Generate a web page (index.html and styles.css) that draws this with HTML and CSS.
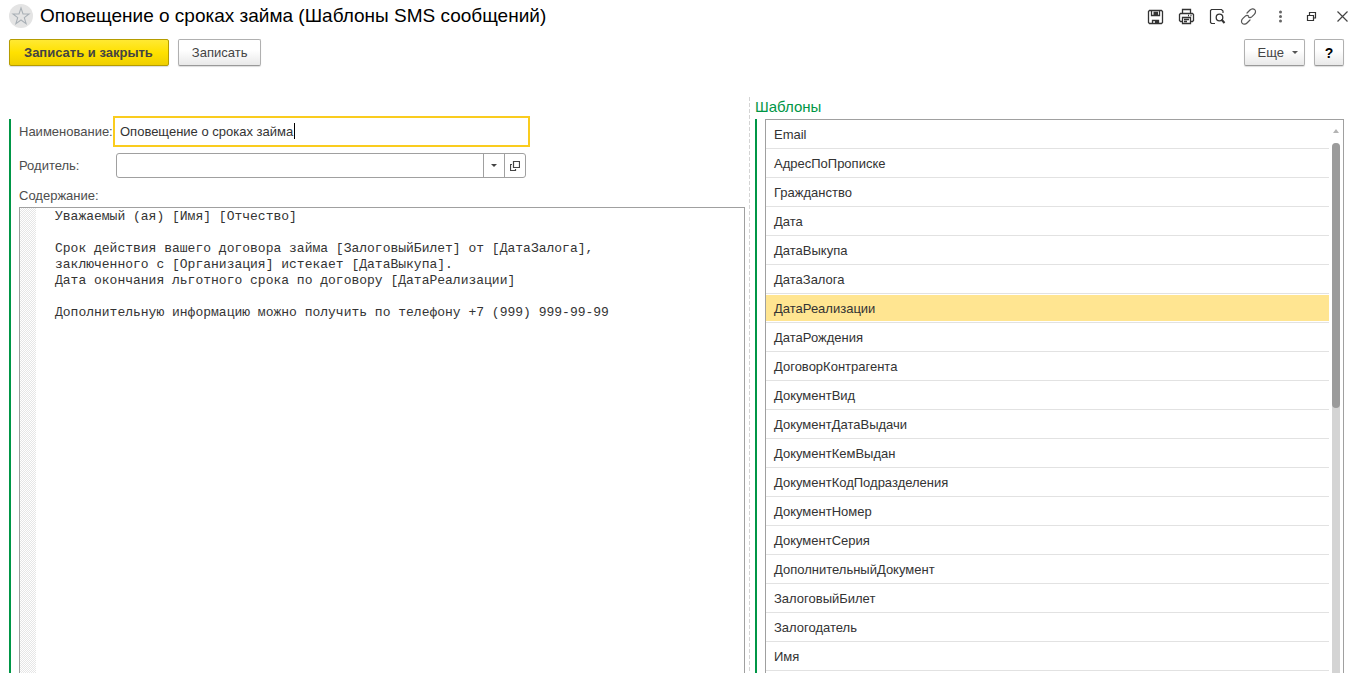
FILE: index.html
```html
<!DOCTYPE html>
<html lang="ru">
<head>
<meta charset="utf-8">
<title>Оповещение о сроках займа (Шаблоны SMS сообщений)</title>
<link rel="stylesheet" href="styles.css">
</head>
<body>
<div class="window">
  <header class="titlebar">
    <button class="star" aria-label="В избранное">
      <svg width="24" height="24" viewBox="0 0 24 24"><circle cx="12" cy="12" r="12" fill="#e4e4e4"/><path d="M12 4l2 6h6l-4.700 3.600 1.800 6L12 16l-5.100 3.600 1.800-6L4 10h6z" fill="none" stroke="#a9b0b6" stroke-width="1.100"/></svg>
    </button>
    <h1 class="title">Оповещение о сроках займа (Шаблоны SMS сообщений)</h1>
    <nav class="tools">
      <button class="tool" aria-label="Сохранить"><svg width="17" height="17" viewBox="0 0 17 17"><path d="M2.500 2.500h12l1 1v11l-1 1h-12l-1-1v-11zM4.500 2.500v5h8v-5M6.500 4.500h4.500M6.500 6h4.500M5.500 15.500v-3h6v3" fill="none" stroke="#333" stroke-width="1.300"/><path d="M8 12.500h3v3H8z" fill="#333"/></svg></button>
      <button class="tool" aria-label="Печать"><svg width="17" height="17" viewBox="0 0 17 17"><path d="M4.500 5.500v-4h8v4M4.500 13.500h-2l-1-1v-6l1-1h12l1 1v6l-1 1h-2M4.500 9.500h8v6h-8zM6 11.500h5M6 13.500h3M10 7.500h1M12.500 7.500h1" fill="none" stroke="#333" stroke-width="1.300"/></svg></button>
      <button class="tool" aria-label="Просмотр"><svg width="17" height="17" viewBox="0 0 17 17"><path d="M6 15.500H2.500L1.500 14.500V2.500L2.500 1.500h10L14 3v2" fill="none" stroke="#333" stroke-width="1.200"/><circle cx="10.500" cy="9.500" r="3.300" fill="none" stroke="#333" stroke-width="1.300"/><path d="M12.500 11.500l3 3.500" stroke="#333" stroke-width="2"/></svg></button>
      <button class="tool" aria-label="Ссылка"><svg width="17" height="17" viewBox="0 0 17 17"><g fill="none" stroke="#555" stroke-width="1.200" stroke-linecap="round"><path d="M7 5l3-3c1.500-1.500 3.500-1.600 4.700-.4s1.100 3.200-.4 4.700L12 8.600c-1.100 1-2.600 1.200-3.500.4"/><path d="M10 12l-3 3c-1.500 1.500-3.500 1.600-4.700.4s-1.100-3.200.4-4.700L5 8.400c1.100-1 2.600-1.200 3.500-.4"/></g></svg></button>
      <button class="tool" aria-label="Ещё"><svg width="17" height="17" viewBox="0 0 17 17" fill="#666"><circle cx="9.500" cy="4" r="1.500"/><circle cx="9.500" cy="8.500" r="1.500"/><circle cx="9.500" cy="13" r="1.500"/></svg></button>
      <button class="tool" aria-label="Свернуть в окно"><svg width="17" height="17" viewBox="0 0 17 17"><path d="M5.500 7.500h6v5h-6zM7.500 7.500V4.500h6v5.500H11.500" fill="none" stroke="#333" stroke-width="1.200"/></svg></button>
      <button class="tool" aria-label="Закрыть"><svg width="17" height="17" viewBox="0 0 17 17"><path d="M4.500 3.500l10 10M14.500 3.500l-10 10" stroke="#444" stroke-width="1.200"/></svg></button>
    </nav>
  </header>

  <div class="commands">
    <button class="btn btn-primary">Записать и закрыть</button>
    <button class="btn">Записать</button>
    <button class="btn btn-more">Еще <svg width="6" height="3" viewBox="0 0 6 3"><path d="M0 0h6L3 3z" fill="#555"/></svg></button>
    <button class="btn btn-help">?</button>
  </div>

  <main class="main">
    <section class="form">
      <div class="row">
        <label class="label" for="name">Наименование:</label>
        <div class="name-field">
          <input class="name-input" id="name" type="text" value="Оповещение о сроках займа">
          <span class="caret"></span>
        </div>
      </div>
      <div class="row row-parent">
        <label class="label" for="parent">Родитель:</label>
        <div class="combo">
          <input class="combo-input" id="parent" type="text">
          <button class="combo-btn" aria-label="Выбрать"><svg width="6" height="3" viewBox="0 0 6 3"><path d="M0 0h6L3 3z" fill="#444"/></svg></button>
          <button class="combo-btn" aria-label="Открыть"><svg width="10" height="10" viewBox="0 0 10 10"><path d="M3.500.5h6v6h-6zM2 3.500H.5v6h5V8" fill="none" stroke="#444" stroke-width="1.200"/></svg></button>
        </div>
      </div>
      <label class="label label-text" for="text">Содержание:</label>
      <div class="editor">
        <div class="gutter"></div>
        <textarea class="text" id="text" spellcheck="false">Уважаемый (ая) [Имя] [Отчество]

Срок действия вашего договора займа [ЗалоговыйБилет] от [ДатаЗалога],
заключенного с [Организация] истекает [ДатаВыкупа].
Дата окончания льготного срока по договору [ДатаРеализации]

Дополнительную информацию можно получить по телефону +7 (999) 999-99-99</textarea>
      </div>
    </section>
    <div class="splitter"></div>
    <section class="templates">
      <h2 class="heading">Шаблоны</h2>
      <div class="group">
        <div class="listbox">
          <ul class="list">
            <li class="item">Email</li>
            <li class="item">АдресПоПрописке</li>
            <li class="item">Гражданство</li>
            <li class="item">Дата</li>
            <li class="item">ДатаВыкупа</li>
            <li class="item">ДатаЗалога</li>
            <li class="item item-selected">ДатаРеализации</li>
            <li class="item">ДатаРождения</li>
            <li class="item">ДоговорКонтрагента</li>
            <li class="item">ДокументВид</li>
            <li class="item">ДокументДатаВыдачи</li>
            <li class="item">ДокументКемВыдан</li>
            <li class="item">ДокументКодПодразделения</li>
            <li class="item">ДокументНомер</li>
            <li class="item">ДокументСерия</li>
            <li class="item">ДополнительныйДокумент</li>
            <li class="item">ЗалоговыйБилет</li>
            <li class="item">Залогодатель</li>
            <li class="item">Имя</li>
          </ul>
          <div class="scroll">
            <svg class="scroll-up" width="6" height="4" viewBox="0 0 6 4"><path d="M3 0l3 4H0z" fill="#b4b4b4"/></svg>
            <div class="track"><div class="thumb"></div></div>
          </div>
        </div>
      </div>
    </section>
  </main>
</div>
</body>
</html>
```
FILE: styles.css
```css
* { box-sizing: border-box; }

body {
  margin: 0;
  background: #fff;
  color: #333;
  font: 13px/16px "Liberation Sans", Arial, sans-serif;
}

button, input, textarea { font: inherit; color: inherit; margin: 0; }

.window {
  display: flex;
  flex-direction: column;
  height: 100vh;
  overflow: hidden;
}

/* Title bar */
.titlebar {
  display: flex;
  align-items: center;
  height: 32px;
  padding: 0 13px 0 9px;
}
.star { display: flex; padding: 0; border: 0; background: none; }
.title {
  flex: 1;
  margin: 0 0 0 7px;
  color: #000;
  font-size: 19px;
  font-weight: 400;
  line-height: 24px;
  white-space: nowrap;
}
.tools { display: flex; gap: 14px; }
.tool { display: flex; padding: 0; border: 0; background: none; }

/* Command bar */
.commands {
  display: flex;
  gap: 9px;
  padding: 7px 19px 0 9px;
}
.btn {
  height: 27px;
  padding: 0 13px;
  border: 1px solid #b0b0b0;
  border-bottom-color: #999;
  border-radius: 2px;
  background: linear-gradient(#fff 40%, #e9e9e9);
  color: #444;
  box-shadow: 0 1px 1px #ddd;
}
.btn-primary {
  padding: 0 15px 0 14px;
  border-color: #b59c00;
  background: linear-gradient(#ffe933, #ffe100 50%, #efcf00);
  font-weight: 700;
}
.btn-more {
  display: flex;
  align-items: center;
  gap: 8px;
  margin-left: auto;
  padding-right: 6px;
}
.btn-help {
  width: 30px;
  padding: 0;
  color: #000;
  font-size: 14px;
  font-weight: 700;
}

/* Content */
.main {
  display: grid;
  grid-template-columns: 736fr 10px 589fr;
  flex: 1;
  min-height: 0;
  padding: 31px 19px 0 9px;
}
.form {
  display: flex;
  flex-direction: column;
  min-width: 0;
  margin-top: 22px;
  padding-left: 8px;
  border-left: 2px solid #009646;
}
.row { display: flex; align-items: center; height: 25px; }
.row-parent { margin-top: 9px; }
.label { width: 94px; color: #4d4d4d; white-space: nowrap; }
.label-text { margin: 10px 0 3px; }

.name-field {
  position: relative;
  width: 417px;
  margin: -4px 0;
}
.name-input {
  width: 100%;
  height: 31px;
  padding: 0 5px;
  border: 2px solid #facc1e;
  outline: 0;
  display: block;
}
.caret {
  position: absolute;
  top: 7px;
  left: 181px;
  width: 1px;
  height: 16px;
  background: #000;
}

.combo {
  display: flex;
  width: 410px;
  height: 25px;
  margin-left: 3px;
  border: 1px solid #a0a0a0;
  border-radius: 3px;
}
.combo-input { flex: 1; min-width: 0; padding: 0 4px; border: 0; background: none; outline: 0; }
.combo-btn {
  display: flex;
  align-items: center;
  justify-content: center;
  width: 21px;
  padding: 0;
  border: 0;
  border-left: 1px solid #a0a0a0;
  background: none;
}

.editor {
  display: flex;
  flex: 1;
  min-height: 0;
  border: 1px solid #a0a0a0;
  border-bottom: 0;
}
.gutter {
  width: 16px;
  background: repeating-conic-gradient(#e6e6e6 0 25%, #fff 0 50%) 0 0 / 2px 2px;
}
.text {
  flex: 1;
  min-width: 0;
  padding: 1px 0 0 19px;
  border: 0;
  outline: 0;
  resize: none;
  overflow: hidden;
  font-family: "Liberation Mono", "Courier New", monospace;
}

.splitter {
  width: 1px;
  margin-left: 4px;
  background: repeating-linear-gradient(#d4d4d4 0 4px, #fff 4px 6px);
}

/* Template list */
.templates { display: flex; flex-direction: column; min-width: 0; }
.heading {
  margin: 0;
  padding-bottom: 2px;
  color: #009646;
  font-size: 15px;
  font-weight: 400;
  line-height: 20px;
}
.group {
  display: flex;
  flex: 1;
  min-height: 0;
  padding-left: 8px;
  border-left: 2px solid #009646;
}
.listbox {
  display: flex;
  flex: 1;
  border: 1px solid #a0a0a0;
  border-bottom: 0;
}
.list { flex: 1; margin: 0; padding: 0; list-style: none; }
.item {
  height: 29px;
  padding: 0 8px;
  border-bottom: 1px solid #e2e2e2;
  line-height: 30px;
}
.item-selected {
  background: #ffe591;
  background-clip: padding-box;
  box-shadow: inset 0 1px #fff, inset 0 -1px #fff;
}
.scroll {
  display: flex;
  flex-direction: column;
  align-items: center;
  width: 14px;
  padding: 9px 0 0;
}
.scroll-up { flex: none; }
.track {
  flex: 1;
  width: 8px;
  margin-top: 10px;
  border-radius: 4px 4px 0 0;
  background: #d4d4d4;
}
.thumb { height: 50%; border-radius: 4px; background: #9b9b9b; }
```
